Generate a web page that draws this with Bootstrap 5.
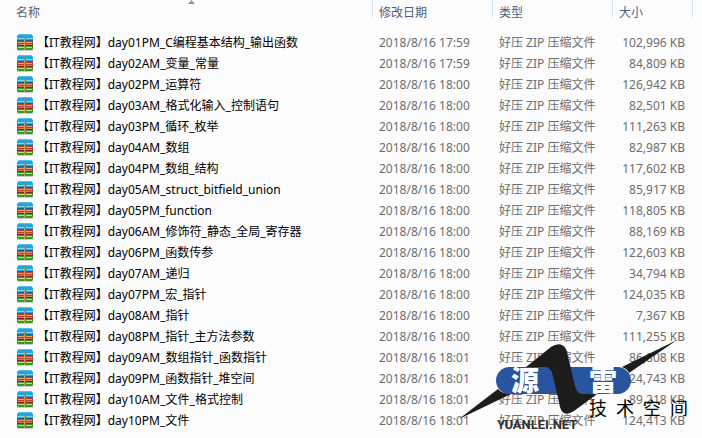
<!DOCTYPE html>
<html lang="zh-CN">
<head>
<meta charset="utf-8">
<meta name="viewport" content="width=device-width, initial-scale=1">
<title>文件列表</title>
<link href="https://cdn.jsdelivr.net/npm/bootstrap@5.3.0/dist/css/bootstrap.min.css" rel="stylesheet">
<style>
body{background:#fcfcfc;font-family:"Noto Sans","Noto Sans CJK SC",sans-serif;font-size:12px;line-height:21px;color:#6d6d6d}
.files{table-layout:fixed;color:inherit;white-space:nowrap}
.files th{height:32px;padding:2px 7px 0;vertical-align:top;font-weight:400;color:#4c607a;
  background:linear-gradient(#d6e5f5 60%,#fcfcfc) left top/1px 22px no-repeat}
.files th:first-child{background:none}
.files td{height:21px;padding:0 7px}
.files th:first-child,.files td:first-child{padding-left:16px}
.files td:first-child{color:#000}
.files .spacer{padding:0}
.c-wide{width:120px}
.c-size{width:80px}
.c-end{width:10px}
.entry{gap:3px}
.zip{width:18px;height:18px}
.sort{left:187px;top:0}
.logo{right:0;top:330px;pointer-events:none}
</style>
</head>
<body>
<main class="position-relative">
<svg width="0" height="0" class="position-absolute" aria-hidden="true">
  <symbol id="zip" viewBox="0 0 18 18">
    <rect x="1" y="15" width="16" height="2" rx="1" fill="#c9cdc9"/>
    <path d="M3 0h12l2 2v5H1V2z" fill="#22a5dc"/>
    <path d="M3 0h12l1 1H2z" fill="#55bfe8"/>
    <path d="M1 4h16v1H1z" fill="#7bd8f7"/>
    <path d="M1 6h16v1H1z" fill="#12689c"/>
    <path d="M1 7h16v5H1z" fill="#b8402f"/>
    <path d="M2 8h14v1H2z" fill="#f29a78"/>
    <path d="M2 10h14v1H2z" fill="#dd7256"/>
    <path d="M1 11h16v1H1z" fill="#7d2a20"/>
    <path d="M1 12h16v3l-1 1H2l-1-1z" fill="#35972a"/>
    <path d="M2 13h14v1H2z" fill="#b4e87c"/>
    <path d="M8 3h2v13H8z" fill="#a06a30"/>
    <path d="M8 3h1v13H8z" fill="#c99655"/>
  </symbol>
</svg>
<svg class="sort position-absolute" width="9" height="4" viewBox="0 0 9 4" aria-hidden="true"><path d="M1 4L4.500 0 8 4z" fill="#6f9cb8"/></svg>
<table class="files w-100">
<colgroup><col><col class="c-wide"><col class="c-wide"><col class="c-size"><col class="c-end"></colgroup>
<thead><tr><th scope="col">名称</th><th scope="col">修改日期</th><th scope="col">类型</th><th scope="col">大小</th><th class="spacer"></th></tr></thead>
<tbody id="rows"></tbody>
</table>
<svg class="logo position-absolute" width="252" height="108" viewBox="0 0 252 108" role="img" aria-label="源雷技术空间">
  <rect x="46" y="37" width="135" height="27" rx="13.500" fill="#2955a0"/>
  <path d="M9 89L48 59Q52 64 61 64z" fill="#1c1c1a"/>
  <path d="M227 10L172 37Q178 39 179 43z" fill="#1c1c1a"/>
  <path d="M76 37L101 17Q107 13 112 15Q116 17 117 22L125 56Q127 64 132 64H147L124 81Q113 88 110 77L103 46Q101 37 95 37z" fill="#1c1c1a"/>
  <g font-family="Noto Sans CJK SC, sans-serif" font-weight="900" font-size="28" fill="#fff"><text x="61" y="61">源</text><text x="139" y="61">雷</text></g>
  <text x="139 166 193 220" y="85" font-family="Noto Sans CJK SC, sans-serif" font-weight="400" font-size="18" fill="#000">技术空间</text>
  <text x="47" y="99" font-family="Roboto, sans-serif" font-weight="700" font-size="13" fill="#333">YUANLEI.NET</text>
</svg>
</main>
<script>
const files = [
["day01PM_C编程基本结构_输出函数","17:59","102,996"],
["day02AM_变量_常量","17:59","84,809"],
["day02PM_运算符","18:00","126,942"],
["day03AM_格式化输入_控制语句","18:00","82,501"],
["day03PM_循环_枚举","18:00","111,263"],
["day04AM_数组","18:00","82,987"],
["day04PM_数组_结构","18:00","117,602"],
["day05AM_struct_bitfield_union","18:00","85,917"],
["day05PM_function","18:00","118,805"],
["day06AM_修饰符_静态_全局_寄存器","18:00","88,169"],
["day06PM_函数传参","18:00","122,603"],
["day07AM_递归","18:00","34,794"],
["day07PM_宏_指针","18:00","124,035"],
["day08AM_指针","18:00","7,367"],
["day08PM_指针_主方法参数","18:00","111,255"],
["day09AM_数组指针_函数指针","18:01","86,808"],
["day09PM_函数指针_堆空间","18:01","124,743"],
["day10AM_文件_格式控制","18:01","89,218"],
["day10PM_文件","18:01","124,413"]];
document.getElementById("rows").innerHTML = files.map(([n,t,s]) =>
`<tr><td><div class="entry d-flex align-items-center"><svg class="zip flex-shrink-0" aria-hidden="true"><use href="#zip"/></svg><span>【IT教程网】${n}</span></div></td><td>2018/8/16 ${t}</td><td>好压 ZIP 压缩文件</td><td class="text-end">${s} KB</td><td class="spacer"></td></tr>`).join("");
</script>
<script src="https://cdn.jsdelivr.net/npm/bootstrap@5.3.0/dist/js/bootstrap.bundle.min.js"></script>
</body>
</html>
